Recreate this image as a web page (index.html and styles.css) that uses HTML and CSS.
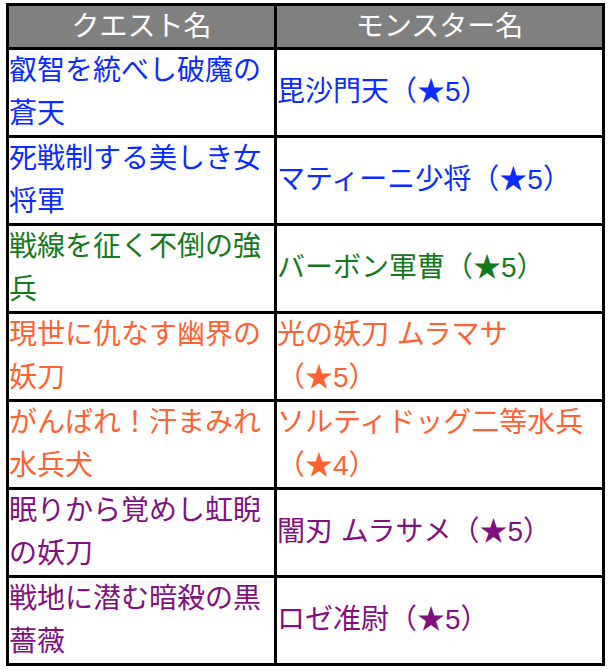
FILE: index.html
```html
<!DOCTYPE html>
<html lang="ja">
<head>
<meta charset="utf-8">
<link rel="stylesheet" href="styles.css">
</head>
<body>
<table class="quest-table">
  <thead>
    <tr>
      <th class="col-quest">クエスト名</th>
      <th class="col-monster">モンスター名</th>
    </tr>
  </thead>
  <tbody>
    <tr class="c-blue">
      <td>叡智を統べし破魔の蒼天</td>
      <td>毘沙門天（★5）</td>
    </tr>
    <tr class="c-blue">
      <td>死戦制する美しき女将軍</td>
      <td>マティーニ少将（★5）</td>
    </tr>
    <tr class="c-green">
      <td>戦線を征く不倒の強兵</td>
      <td>バーボン軍曹（★5）</td>
    </tr>
    <tr class="c-orange">
      <td>現世に仇なす幽界の妖刀</td>
      <td>光の妖刀 ムラマサ（★5）</td>
    </tr>
    <tr class="c-orange">
      <td>がんばれ！汗まみれ水兵犬</td>
      <td>ソルティドッグ二等水兵（★4）</td>
    </tr>
    <tr class="c-purple">
      <td>眠りから覚めし虹睨の妖刀</td>
      <td>闇刃 ムラサメ（★5）</td>
    </tr>
    <tr class="c-purple">
      <td>戦地に潜む暗殺の黒薔薇</td>
      <td>ロゼ准尉（★5）</td>
    </tr>
  </tbody>
</table>
</body>
</html>
```
FILE: styles.css
```css
html, body {
  margin: 0;
  padding: 0;
  background: #ffffff;
}

body {
  padding: 3px 0 0 6px;
  font-family: "Liberation Sans", "Noto Sans CJK JP", sans-serif;
}

.quest-table {
  box-sizing: border-box;
  width: 599px;
  table-layout: fixed;
  border-collapse: separate;
  border-spacing: 0;
  border-top: 3px solid #000;
  border-left: 3px solid #000;
  font-size: 28px;
  text-spacing-trim: space-all;
}

.quest-table th,
.quest-table td {
  box-sizing: border-box;
  border-right: 3px solid #000;
  border-bottom: 3px solid #000;
  padding: 0;
  font-weight: normal;
  text-spacing-trim: space-all;
}

.quest-table th {
  background: #808080;
  color: #ffffff;
  text-align: center;
  height: 44px;
  line-height: 41px;
}

.col-quest {
  width: 268px;
}

.col-monster {
  width: 328px;
}

.quest-table td {
  height: 88px;
  line-height: 42.5px;
  text-align: left;
  vertical-align: middle;
}

.c-blue td {
  color: #0a2cff;
}

.c-green td {
  color: #137a1c;
}

.c-orange td {
  color: #ff6131;
}

.c-purple td {
  color: #82107f;
}
```
